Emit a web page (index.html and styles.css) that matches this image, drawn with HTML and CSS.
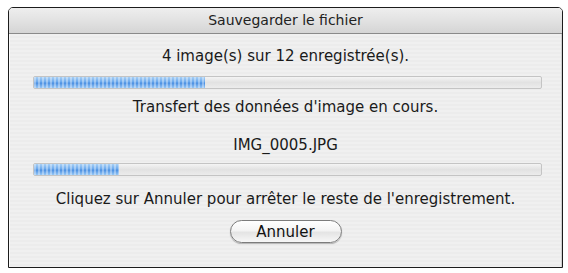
FILE: index.html
```html
<!DOCTYPE html>
<html lang="fr">
<head>
<meta charset="utf-8">
<title>Sauvegarder le fichier</title>
<link rel="stylesheet" href="styles.css">
</head>
<body>
<div class="window">
  <div class="titlebar">Sauvegarder le fichier</div>
  <div class="content">
    <div class="line l1">4 image(s) sur 12 enregistrée(s).</div>
    <div class="progress p1"><div class="fill" style="width:33.8%"></div></div>
    <div class="line l2">Transfert des données d'image en cours.</div>
    <div class="line l3">IMG_0005.JPG</div>
    <div class="progress p2"><div class="fill" style="width:16.7%"></div></div>
    <div class="line l4">Cliquez sur Annuler pour arrêter le reste de l'enregistrement.</div>
    <div class="btnrow"><button class="btn">Annuler</button></div>
  </div>
</div>
</body>
</html>
```
FILE: styles.css
```css
html, body {
  margin: 0;
  padding: 0;
  background: #ffffff;
}
body {
  font-family: "DejaVu Sans", "Liberation Sans", sans-serif;
  font-size: 15px;
  color: #1a1a1a;
}
.window {
  margin: 7px 5px 0 8px;
  width: 553px;
  border: 1px solid #1c1c1c;
  border-radius: 5px 5px 0 0;
  overflow: hidden;
}
.titlebar {
  height: 25px;
  line-height: 25px;
  text-align: center;
  font-size: 14px;
  background: linear-gradient(#eeeeee, #e2e2e2 50%, #d5d5d5);
  border-bottom: 1px solid #8a8a8a;
  color: #222;
}
.content {
  display: flex;
  flex-direction: column;
  padding: 13px 0 24px 0;
  background: repeating-linear-gradient(#f0f0f0 0 2px, #ececec 2px 4px);
  border-left: 1px solid #fafafa;
  border-right: 1px solid #d0d0d0;
}
.line {
  height: 18px;
  line-height: 18px;
  text-align: center;
}
.progress {
  margin-left: 23px;
  width: 507px;
  height: 11px;
  border: 1px solid #c4c4c4;
  border-radius: 2px;
  background: linear-gradient(#f4f4f4, #e2e2e2 50%, #ececec);
  overflow: hidden;
}
.fill {
  height: 100%;
  background:
    repeating-linear-gradient(90deg, rgba(255,255,255,0.35) 0 2px, rgba(255,255,255,0) 2px 4px),
    linear-gradient(#a8d0f6, #6aa8ec 45%, #4a8fe2 55%, #98c8f6);
}
.p1 { margin-top: 11px; }
.l2 { margin-top: 9px; }
.l3 { margin-top: 20px; }
.p2 { margin-top: 9px; }
.l4 { margin-top: 14px; }
.btnrow {
  margin-top: 12px;
  display: flex;
  justify-content: center;
}
.btn {
  width: 112px;
  height: 23px;
  border: 1px solid #7c7c7c;
  border-radius: 12px;
  background: linear-gradient(#ffffff, #f4f4f4 45%, #e4e4e4 55%, #f7f7f7);
  box-shadow: 0 1px 1px rgba(0,0,0,0.25);
  font-family: "DejaVu Sans", "Liberation Sans", sans-serif;
  font-size: 15px;
  color: #111;
  padding: 0;
}
```
